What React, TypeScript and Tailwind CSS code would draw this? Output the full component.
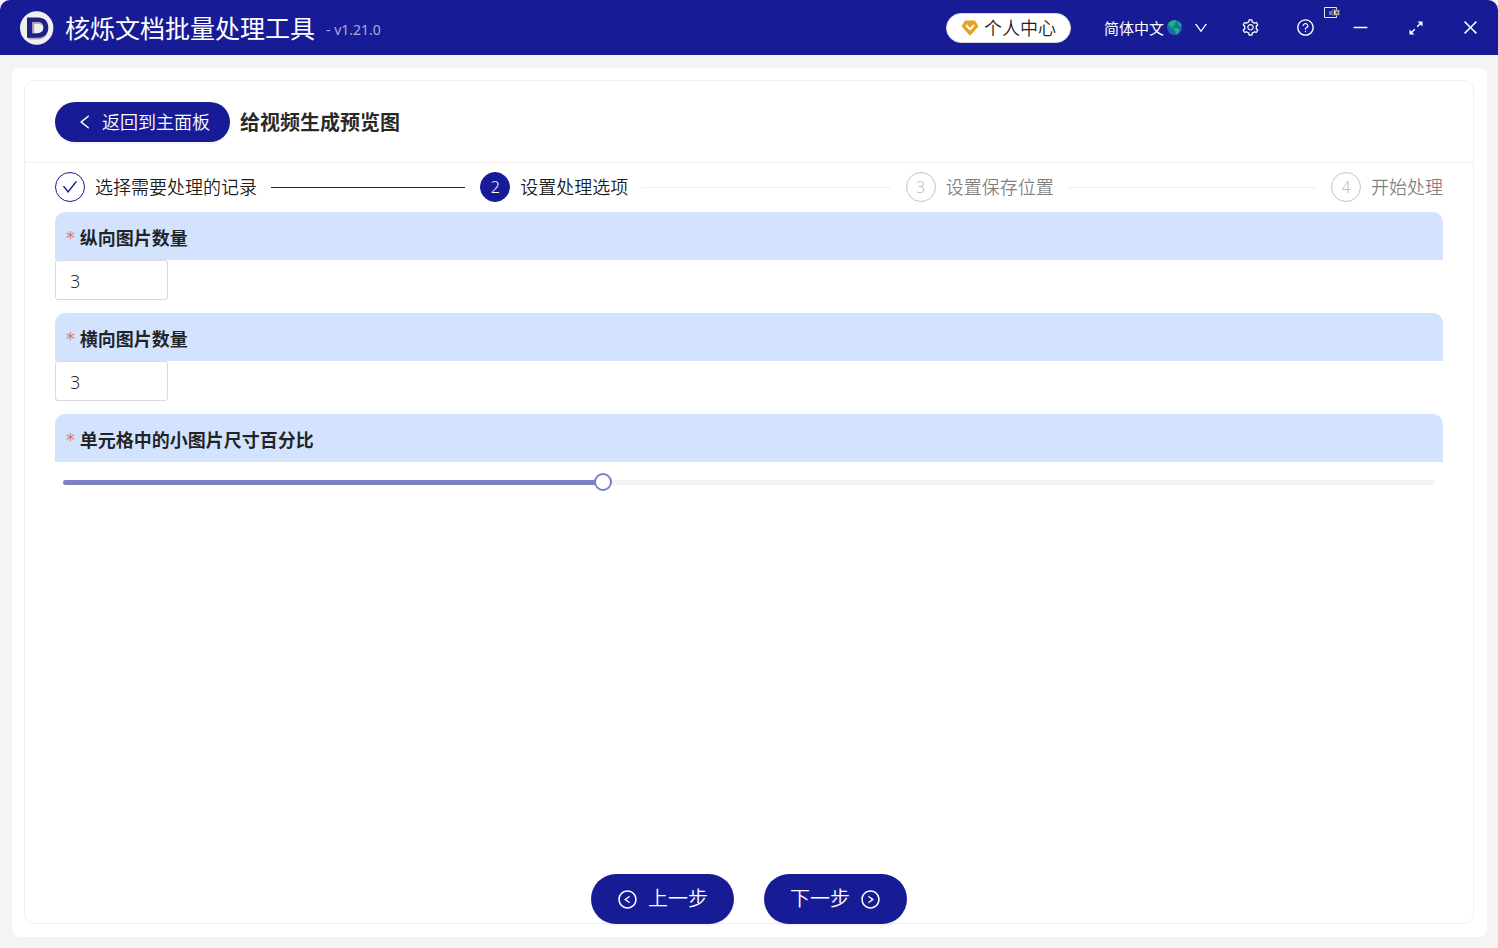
import { useState } from 'react';
import {
  AiOutlineCheck, AiOutlineClose, AiOutlineDown, AiOutlineLeft, AiOutlineLeftCircle,
  AiOutlineMinus, AiOutlineQuestionCircle, AiOutlineRightCircle, AiOutlineSetting
} from 'react-icons/ai';

const STEPS = ['选择需要处理的记录', '设置处理选项', '设置保存位置', '开始处理'];
const CURRENT_STEP = 1;

const Logo = () => (
  <svg width="34" height="34" viewBox="0 0 34 34" aria-hidden="true">
    <circle cx="16.700" cy="17" r="16.700" fill="#f1f0f1" />
    <path d="M7.500 10H18c6 0 9.500 3.500 9.500 9.300 0 5.500-4 9.200-9.500 9.200H9.500l-2-2z" fill="#b5a5a8" />
    <path d="M7 6.500h11c6.500 0 10.300 4 10.300 10S24.500 26.800 18 26.800H7z" fill="#1c2089" />
    <path d="M12.500 11H17c4 0 6.300 2 6.300 5.600S21 22.300 17 22.300h-4.500z" fill="#f1f0f1" />
    <path d="M12.500 11H17c3.600 0 5.800 1.500 6.300 4.500-1.300-1.700-3-2.500-5.800-2.500h-3.200v9.300h-1.800z" fill="#b5a5b0" />
  </svg>
);

const Diamond = () => (
  <svg width="18" height="18" viewBox="0 0 18 18" aria-hidden="true">
    <path d="M4.300 2h9.400l3.300 5.300L9 16.300 1 7.300z" fill="#e6a023" stroke="#e6a023" strokeLinejoin="round" />
    <path d="M5.600 6.600 9 10.400l3.400-3.800" fill="none" stroke="#fff" strokeWidth="2" strokeLinecap="round" strokeLinejoin="round" />
  </svg>
);

const Globe = () => (
  <svg width="15" height="15" viewBox="0 0 15 15" aria-hidden="true">
    <circle cx="7.500" cy="7.500" r="7.500" fill="#2166b0" />
    <path d="M1.500 3C3 1 6 0 8.500.2L10 1.500 8.500 3l-1.200.7 1.400.8L7.200 6l-1.700.5.8 1.700 2 .2-.8 1L5 8.500 3.200 6.500 1.300 5z" fill="#13b877" />
    <path d="m7.500 7.800 3 .2 2.300 1.800-1 2.500L9.200 15l-.7-3L7 10.200z" fill="#13b877" />
    <path d="m11 1.300 2.300 1.700 1.400 3-1.700.3-1.700-2z" fill="#13b877" />
  </svg>
);

const Expand = () => (
  <svg width="14" height="14" viewBox="0 0 14 14" aria-hidden="true" fill="currentColor">
    <path d="M8.500 .5h5v5zM.5 8.500v5h5z" />
    <path d="m11.800 2.200-3.600 3.600M5.800 8.200l-3.600 3.600" stroke="currentColor" strokeWidth="1.400" />
  </svg>
);

const CaptureBadge = () => (
  <svg width="16" height="12" viewBox="0 0 16 12" aria-hidden="true" className="absolute top-[7px] left-[46px]">
    <path d="M.5.5h12v10H.5z" fill="#171c96" stroke="#e8e8e0" />
    <path d="M5 4h4v4H5z" fill="#6f78b4" />
    <path d="M8 2h4v7H8z" fill="#55585a" />
    <path d="M9.500 3h6v5h-6z" fill="#f4f4ea" stroke="#555" />
    <path d="M11.500 4.500h3v2h-3z" fill="#333" />
  </svg>
);

const Field = ({ id, label, children }: { id: string; label: string; children: React.ReactNode }) => (
  <div className="mb-[13px]">
    <label htmlFor={id} className="flex h-12 items-center rounded-t-[10px] bg-[#d3e2fd] pt-[3px] pl-[10px] text-lg font-bold">
      <span className="mr-1 font-['DejaVu_Sans_Mono'] font-normal text-[#d9776a]">*</span>
      {label}
    </label>
    {children}
  </div>
);

const NumberField = ({ id, label }: { id: string; label: string }) => {
  const [value, setValue] = useState('3');
  return (
    <Field id={id} label={label}>
      <input
        id={id}
        type="number"
        value={value}
        onChange={e => setValue(e.target.value)}
        className="block h-10 w-[113px] rounded-[3px] border border-[#d9d9d9] bg-white px-[14px] pt-[2px] text-lg font-[350] outline-none [appearance:textfield]"
      />
    </Field>
  );
};

const WindowBar = () => (
  <header className="flex h-[55px] items-center rounded-t-[10px] bg-[#171c96] pl-5 text-white">
    <Logo />
    <h1 className="mt-[3px] ml-[11px] text-[25px]">核烁文档批量处理工具</h1>
    <span className="mt-1 ml-[11px] text-sm text-[#a9abd8]">- v1.21.0</span>

    <button className="ml-auto flex h-[30px] items-center gap-[5px] rounded-full border border-[#d9d9d9] bg-white px-[14px] text-lg font-[350] text-black/90">
      <Diamond />
      个人中心
    </button>
    <div className="ml-[33px] flex items-center gap-[2px]">
      <select aria-label="语言" className="mt-[2px] appearance-none bg-transparent text-[15px] outline-none">
        <option>简体中文</option>
      </select>
      <Globe />
      <AiOutlineDown size={16} className="ml-[9px]" />
    </div>

    <div className="ml-[14px] flex">
      <button aria-label="设置" className="flex h-[55px] w-[55px] items-center justify-center"><AiOutlineSetting size={19} /></button>
      <div className="relative">
        <button aria-label="帮助" className="flex h-[55px] w-[55px] items-center justify-center"><AiOutlineQuestionCircle size={19} /></button>
        <CaptureBadge />
      </div>
      <button aria-label="最小化" className="flex h-[55px] w-[55px] items-center justify-center"><AiOutlineMinus size={19} /></button>
      <button aria-label="最大化" className="flex h-[55px] w-[55px] items-center justify-center"><Expand /></button>
      <button aria-label="关闭" className="flex h-[55px] w-[55px] items-center justify-center"><AiOutlineClose size={19} /></button>
    </div>
  </header>
);

const StepBar = () => (
  <ol className="mb-px flex h-12 items-center text-lg font-[350]">
    {STEPS.map((title, i) => {
      const done = i < CURRENT_STEP;
      const active = i === CURRENT_STEP;
      const last = i === STEPS.length - 1;
      return (
        <li key={title} className={`flex items-center ${last ? '' : 'mr-[15px] flex-1'}`}>
          <span
            className={`mr-[10px] flex h-[30px] w-[30px] items-center justify-center rounded-full border text-base ${
              done ? 'border-[#171c96] text-[#171c96]' : active ? 'border-[#171c96] bg-[#171c96] text-white' : 'border-[#c4c4c0] text-[#bfbfbf]'
            }`}
          >
            {done ? <AiOutlineCheck size={18} /> : i + 1}
          </span>
          <span className={done || active ? 'text-black/90' : 'text-black/50'}>{title}</span>
          {!last && <span className={`ml-[14px] h-px flex-1 ${done ? 'bg-[#171c96]' : 'bg-[#f0f0f0]'}`} />}
        </li>
      );
    })}
  </ol>
);

const PercentField = () => {
  const [value, setValue] = useState(40);
  const min = 1;
  const max = 100;
  const ratio = ((value - min) / (max - min)) * 100;

  return (
    <Field id="percent" label="单元格中的小图片尺寸百分比">
      <div className="grid h-10 items-center">
        <div className="col-start-1 row-start-1 mx-2 h-[5px] rounded-full bg-[#f4f4f4]">
          <div className="h-full rounded-full bg-[#7a82c4]" style={{ width: `${ratio}%` }} />
        </div>
        <input
          id="percent"
          type="range"
          min={min}
          max={max}
          value={value}
          onChange={e => setValue(Number(e.target.value))}
          className="z-10 col-start-1 row-start-1 -mx-px h-[18px] appearance-none bg-transparent outline-none [&::-webkit-slider-thumb]:h-[18px] [&::-webkit-slider-thumb]:w-[18px] [&::-webkit-slider-thumb]:appearance-none [&::-webkit-slider-thumb]:rounded-full [&::-webkit-slider-thumb]:border-2 [&::-webkit-slider-thumb]:border-[#7a82c4] [&::-webkit-slider-thumb]:bg-white"
        />
      </div>
    </Field>
  );
};

const App = () => {
  return (
    <div className="flex min-h-screen flex-col bg-[#f4f4f4] font-['Noto_Sans','Noto_Sans_CJK_SC',sans-serif] text-black/85">
      <WindowBar />
      <main className="mt-[13px] mr-[11px] mb-[11px] ml-3 flex flex-1 flex-col rounded-lg bg-white pt-3 pr-[13px] pb-[13px] pl-3">
        <section className="flex flex-1 flex-col rounded-[10px] border border-[#f0f0f0]">
          <div className="flex h-[82px] items-center border-b border-[#f0f0f0] px-[30px]">
            <button className="flex h-10 items-center gap-2 rounded-full bg-[#171c96] pr-5 pl-[21px] text-lg font-[350] text-white shadow-[0_2px_0_rgba(0,0,0,0.04)]">
              <AiOutlineLeft size={18} />
              返回到主面板
            </button>
            <h2 className="mt-[3px] ml-[10px] text-xl font-bold">给视频生成预览图</h2>
          </div>

          <div className="flex-1 px-[30px]">
            <StepBar />
            <NumberField id="rows" label="纵向图片数量" />
            <NumberField id="columns" label="横向图片数量" />
            <PercentField />
          </div>

          {/* Step navigation */}
          <div className="-mb-px flex justify-center gap-[30px]">
            <button className="flex h-[50px] items-center gap-[10px] rounded-full bg-[#171c96] px-[26px] text-xl font-[350] text-white shadow-[0_2px_0_rgba(0,0,0,0.04)]">
              <AiOutlineLeftCircle size={21} />
              上一步
            </button>
            <button className="flex h-[50px] items-center gap-[10px] rounded-full bg-[#171c96] px-[26px] text-xl font-[350] text-white shadow-[0_2px_0_rgba(0,0,0,0.04)]">
              下一步
              <AiOutlineRightCircle size={21} />
            </button>
          </div>
        </section>
      </main>
    </div>
  );
};

export default App;
